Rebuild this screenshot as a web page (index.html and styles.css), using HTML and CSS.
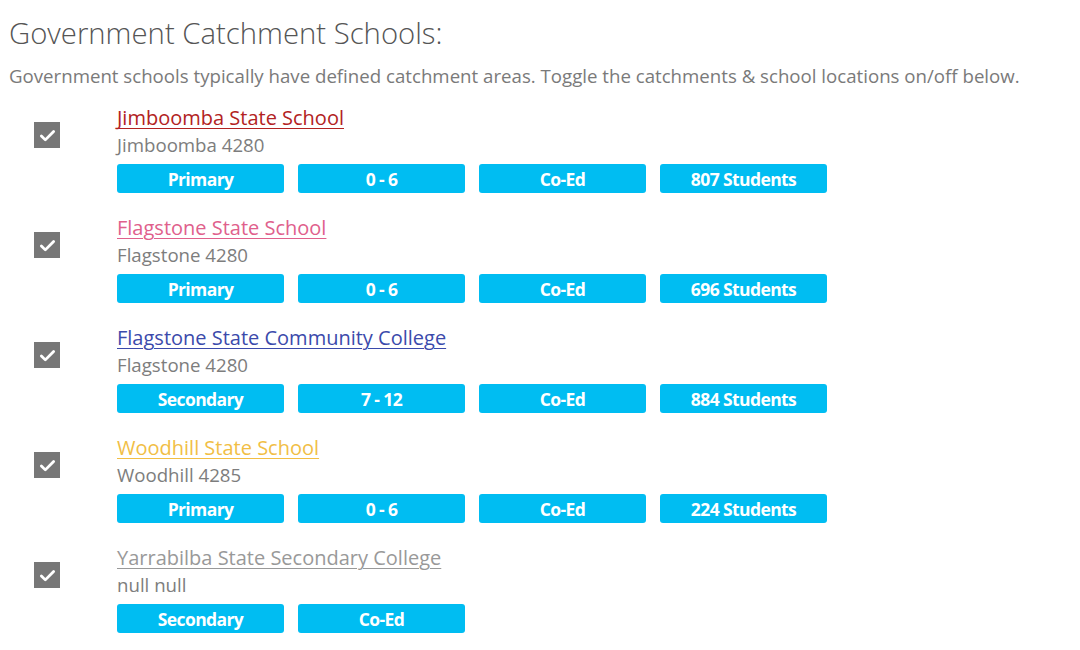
FILE: index.html
```html
<!DOCTYPE html>
<html>
<head>
<meta charset="utf-8">
<link rel="stylesheet" href="styles.css">
</head>
<body>
<div class="page">
  <h1 class="title">Government Catchment Schools:</h1>
  <p class="intro">Government schools typically have defined catchment areas. Toggle the catchments &amp; school locations on/off below.</p>
  <ul class="schools">
    <li class="school">
      <div class="check"><svg viewBox="0 0 24 24" width="21" height="21"><path d="M5 12.5l4.5 4.5L19 7.5" fill="none" stroke="#fff" stroke-width="3.2" stroke-linecap="round" stroke-linejoin="round"/></svg></div>
      <div class="info">
        <a class="name red" href="#">Jimboomba State School</a>
        <div class="addr">Jimboomba 4280</div>
        <div class="tags"><span class="tag">Primary</span><span class="tag">0 - 6</span><span class="tag">Co-Ed</span><span class="tag">807 Students</span></div>
      </div>
    </li>
    <li class="school">
      <div class="check"><svg viewBox="0 0 24 24" width="21" height="21"><path d="M5 12.5l4.5 4.5L19 7.5" fill="none" stroke="#fff" stroke-width="3.2" stroke-linecap="round" stroke-linejoin="round"/></svg></div>
      <div class="info">
        <a class="name pink" href="#">Flagstone State School</a>
        <div class="addr">Flagstone 4280</div>
        <div class="tags"><span class="tag">Primary</span><span class="tag">0 - 6</span><span class="tag">Co-Ed</span><span class="tag">696 Students</span></div>
      </div>
    </li>
    <li class="school">
      <div class="check"><svg viewBox="0 0 24 24" width="21" height="21"><path d="M5 12.5l4.5 4.5L19 7.5" fill="none" stroke="#fff" stroke-width="3.2" stroke-linecap="round" stroke-linejoin="round"/></svg></div>
      <div class="info">
        <a class="name blue" href="#">Flagstone State Community College</a>
        <div class="addr">Flagstone 4280</div>
        <div class="tags"><span class="tag">Secondary</span><span class="tag">7 - 12</span><span class="tag">Co-Ed</span><span class="tag">884 Students</span></div>
      </div>
    </li>
    <li class="school">
      <div class="check"><svg viewBox="0 0 24 24" width="21" height="21"><path d="M5 12.5l4.5 4.5L19 7.5" fill="none" stroke="#fff" stroke-width="3.2" stroke-linecap="round" stroke-linejoin="round"/></svg></div>
      <div class="info">
        <a class="name yellow" href="#">Woodhill State School</a>
        <div class="addr">Woodhill 4285</div>
        <div class="tags"><span class="tag">Primary</span><span class="tag">0 - 6</span><span class="tag">Co-Ed</span><span class="tag">224 Students</span></div>
      </div>
    </li>
    <li class="school">
      <div class="check"><svg viewBox="0 0 24 24" width="21" height="21"><path d="M5 12.5l4.5 4.5L19 7.5" fill="none" stroke="#fff" stroke-width="3.2" stroke-linecap="round" stroke-linejoin="round"/></svg></div>
      <div class="info">
        <a class="name grey" href="#">Yarrabilba State Secondary College</a>
        <div class="addr">null null</div>
        <div class="tags"><span class="tag">Secondary</span><span class="tag">Co-Ed</span></div>
      </div>
    </li>
  </ul>
</div>
</body>
</html>
```

FILE: styles.css
```css
* { box-sizing: border-box; }
html, body { margin: 0; padding: 0; background: #fff; }
body { font-family: "Open Sans", "Liberation Sans", sans-serif; }
.page { padding: 14px 0 0 9px; }
.title {
  margin: 0;
  font-size: 29.3px;
  font-weight: 300;
  line-height: 38px;
  color: #555;
}
.intro {
  margin: 11px 0 0 0;
  font-size: 18.67px;
  line-height: 26px;
  color: #7a7a7a;
}
.schools { list-style: none; margin: 16px 0 0 0; padding: 0; }
.school { display: flex; align-items: flex-start; margin-bottom: 22px; }
.check {
  width: 26px; height: 26px;
  margin: 17px 0 0 25px;
  background: #777;
  display: flex; align-items: center; justify-content: center;
  flex-shrink: 0;
}
.info { margin-left: 57px; }
.name {
  display: block;
  width: max-content;
  font-size: 20px;
  line-height: 26px;
  text-decoration: underline;
  text-underline-offset: 3px;
  text-decoration-thickness: 1px;
}
.red { color: #b22222; }
.pink { color: #e0608c; }
.blue { color: #3b4aab; }
.yellow { color: #f1be45; }
.grey { color: #999; }
.addr { font-size: 18.67px; line-height: 28px; color: #7d7d7d; }
.tags { display: flex; gap: 14px; margin-top: 5px; }
.tag {
  width: 167px; height: 29px;
  background: #00bdf2;
  border-radius: 3px;
  color: #fff;
  font-weight: 700;
  font-size: 17.5px;
  letter-spacing: -0.6px;
  display: flex; align-items: center; justify-content: center;
}
```
